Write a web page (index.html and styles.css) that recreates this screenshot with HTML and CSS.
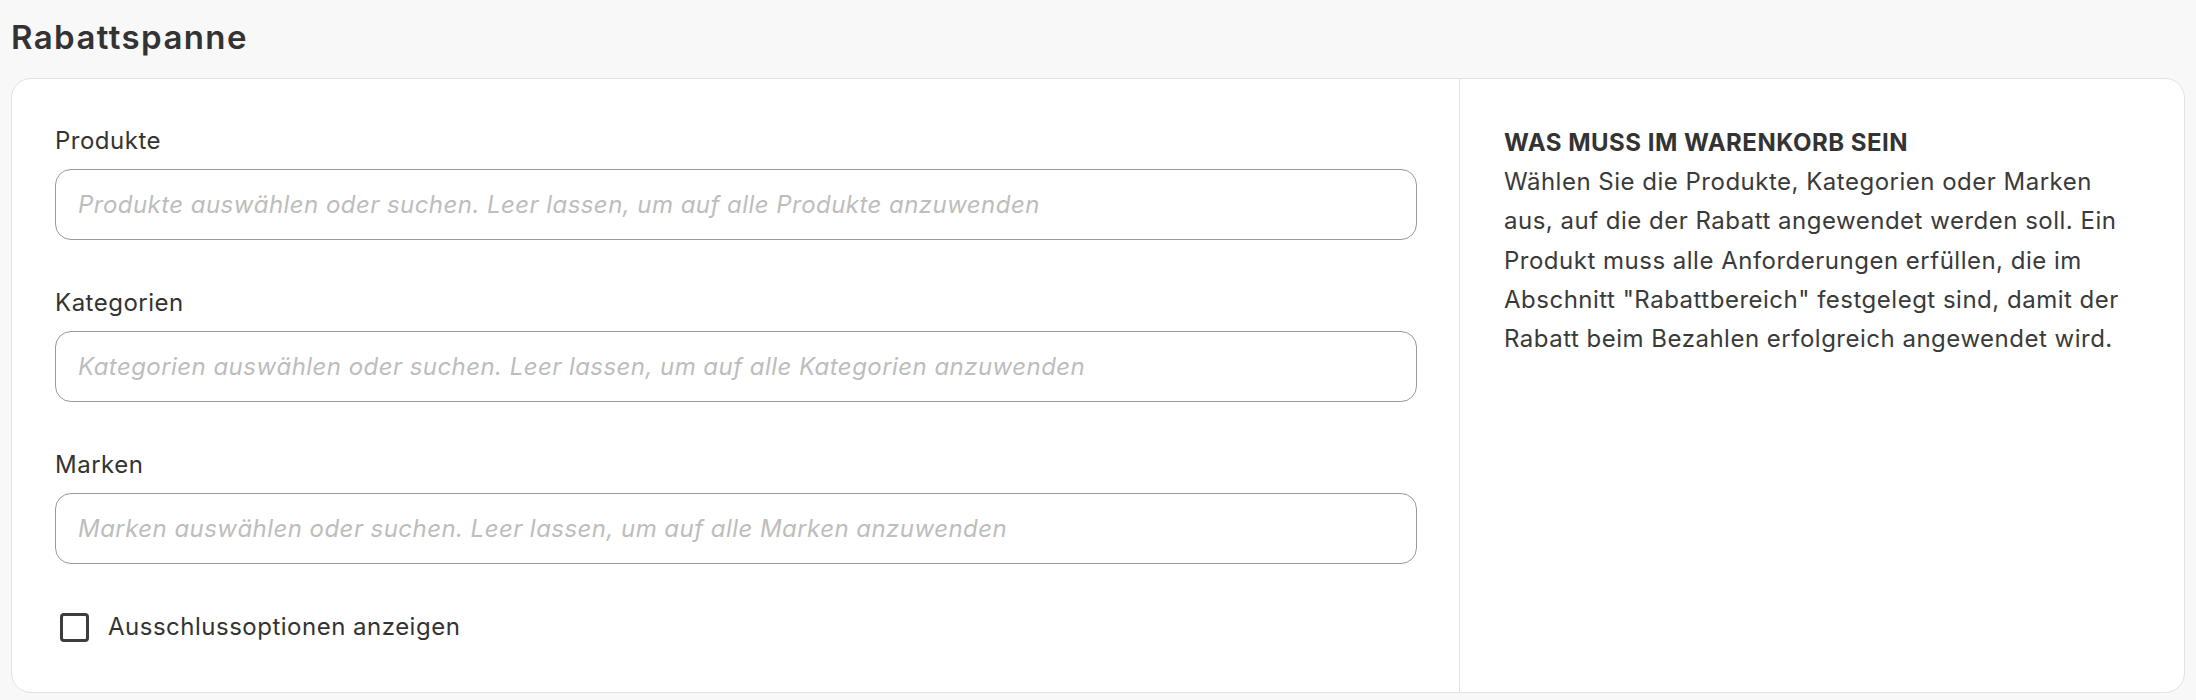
FILE: index.html
```html
<!DOCTYPE html>
<html lang="de">
<head>
    <meta charset="UTF-8">
    <meta name="viewport" content="width=device-width, initial-scale=1.0">
    <title>Rabattspanne</title>
    <link rel="stylesheet" href="styles.css">
</head>
<body>
    <div class="page">
        <h2 class="title">Rabattspanne</h2>
        <div class="card">
            <div class="left">
                <div class="field">
                    <label for="produkte">Produkte</label>
                    <input type="text" id="produkte" class="select-box" placeholder="Produkte auswählen oder suchen. Leer lassen, um auf alle Produkte anzuwenden">
                </div>
                <div class="field">
                    <label for="kategorien">Kategorien</label>
                    <input type="text" id="kategorien" class="select-box" placeholder="Kategorien auswählen oder suchen. Leer lassen, um auf alle Kategorien anzuwenden">
                </div>
                <div class="field">
                    <label for="marken">Marken</label>
                    <input type="text" id="marken" class="select-box" placeholder="Marken auswählen oder suchen. Leer lassen, um auf alle Marken anzuwenden">
                </div>
                <label class="check-row">
                    <input type="checkbox" class="check">
                    <span>Ausschlussoptionen anzeigen</span>
                </label>
            </div>
            <div class="right">
                <h3 class="info-head">WAS MUSS IM WARENKORB SEIN</h3>
                <p class="info-text">Wählen Sie die Produkte, Kategorien oder Marken aus, auf die der Rabatt angewendet werden soll. Ein Produkt muss alle Anforderungen erfüllen, die im Abschnitt "Rabattbereich" festgelegt sind, damit der Rabatt beim Bezahlen erfolgreich angewendet wird.</p>
            </div>
        </div>
    </div>
</body>
</html>
```
FILE: styles.css
```css
body {
    margin: 0;
    background-color: #f8f8f8;
    font-family: 'Inter', 'Noto Sans', sans-serif;
    color: #333;
    letter-spacing: 0.5px;
}

.page {
    padding: 15px 11px 8px 11px;
}

.title {
    margin: 0 0 18px 0;
    font-size: 33px;
    line-height: 45px;
    font-weight: 600;
    letter-spacing: 1.4px;
    color: #333;
}

.card {
    display: grid;
    grid-template-columns: 2fr 1fr;
    background-color: #fff;
    border: 1px solid #e2e2e2;
    border-radius: 20px;
}

.left {
    padding: 44px 42px 47px 43px;
    display: flex;
    flex-direction: column;
    gap: 45px;
    border-right: 1px solid #e2e2e2;
}

.field {
    display: flex;
    flex-direction: column;
}

.field label {
    font-size: 24px;
    line-height: 36px;
    margin-bottom: 10px;
    color: #333;
}

.select-box {
    box-sizing: border-box;
    height: 71px;
    width: 100%;
    padding: 0 22px;
    border: 1.4px solid #9a9a9a;
    border-radius: 16px;
    font-family: 'Inter', 'Noto Sans', sans-serif;
    font-size: 24px;
    letter-spacing: 0.45px;
    color: #333;
    background: #fff;
    outline: none;
}

.select-box::placeholder {
    font-style: italic;
    color: #bdbdbd;
}

.check-row {
    display: flex;
    align-items: center;
    gap: 19px;
    font-size: 24px;
    line-height: 36px;
    color: #333;
    padding-left: 5px;
}

.check {
    appearance: none;
    margin: 0;
    width: 29px;
    height: 29px;
    border: 3px solid #3d3d3d;
    border-radius: 4px;
    box-sizing: border-box;
    background: #fff;
}

.right {
    padding: 44px;
}

.info-head {
    margin: 0;
    font-size: 24px;
    line-height: 39.2px;
    font-weight: 700;
    color: #333;
}

.info-text {
    margin: 0;
    font-size: 24px;
    line-height: 39.2px;
    color: #3a3a3a;
}
```
